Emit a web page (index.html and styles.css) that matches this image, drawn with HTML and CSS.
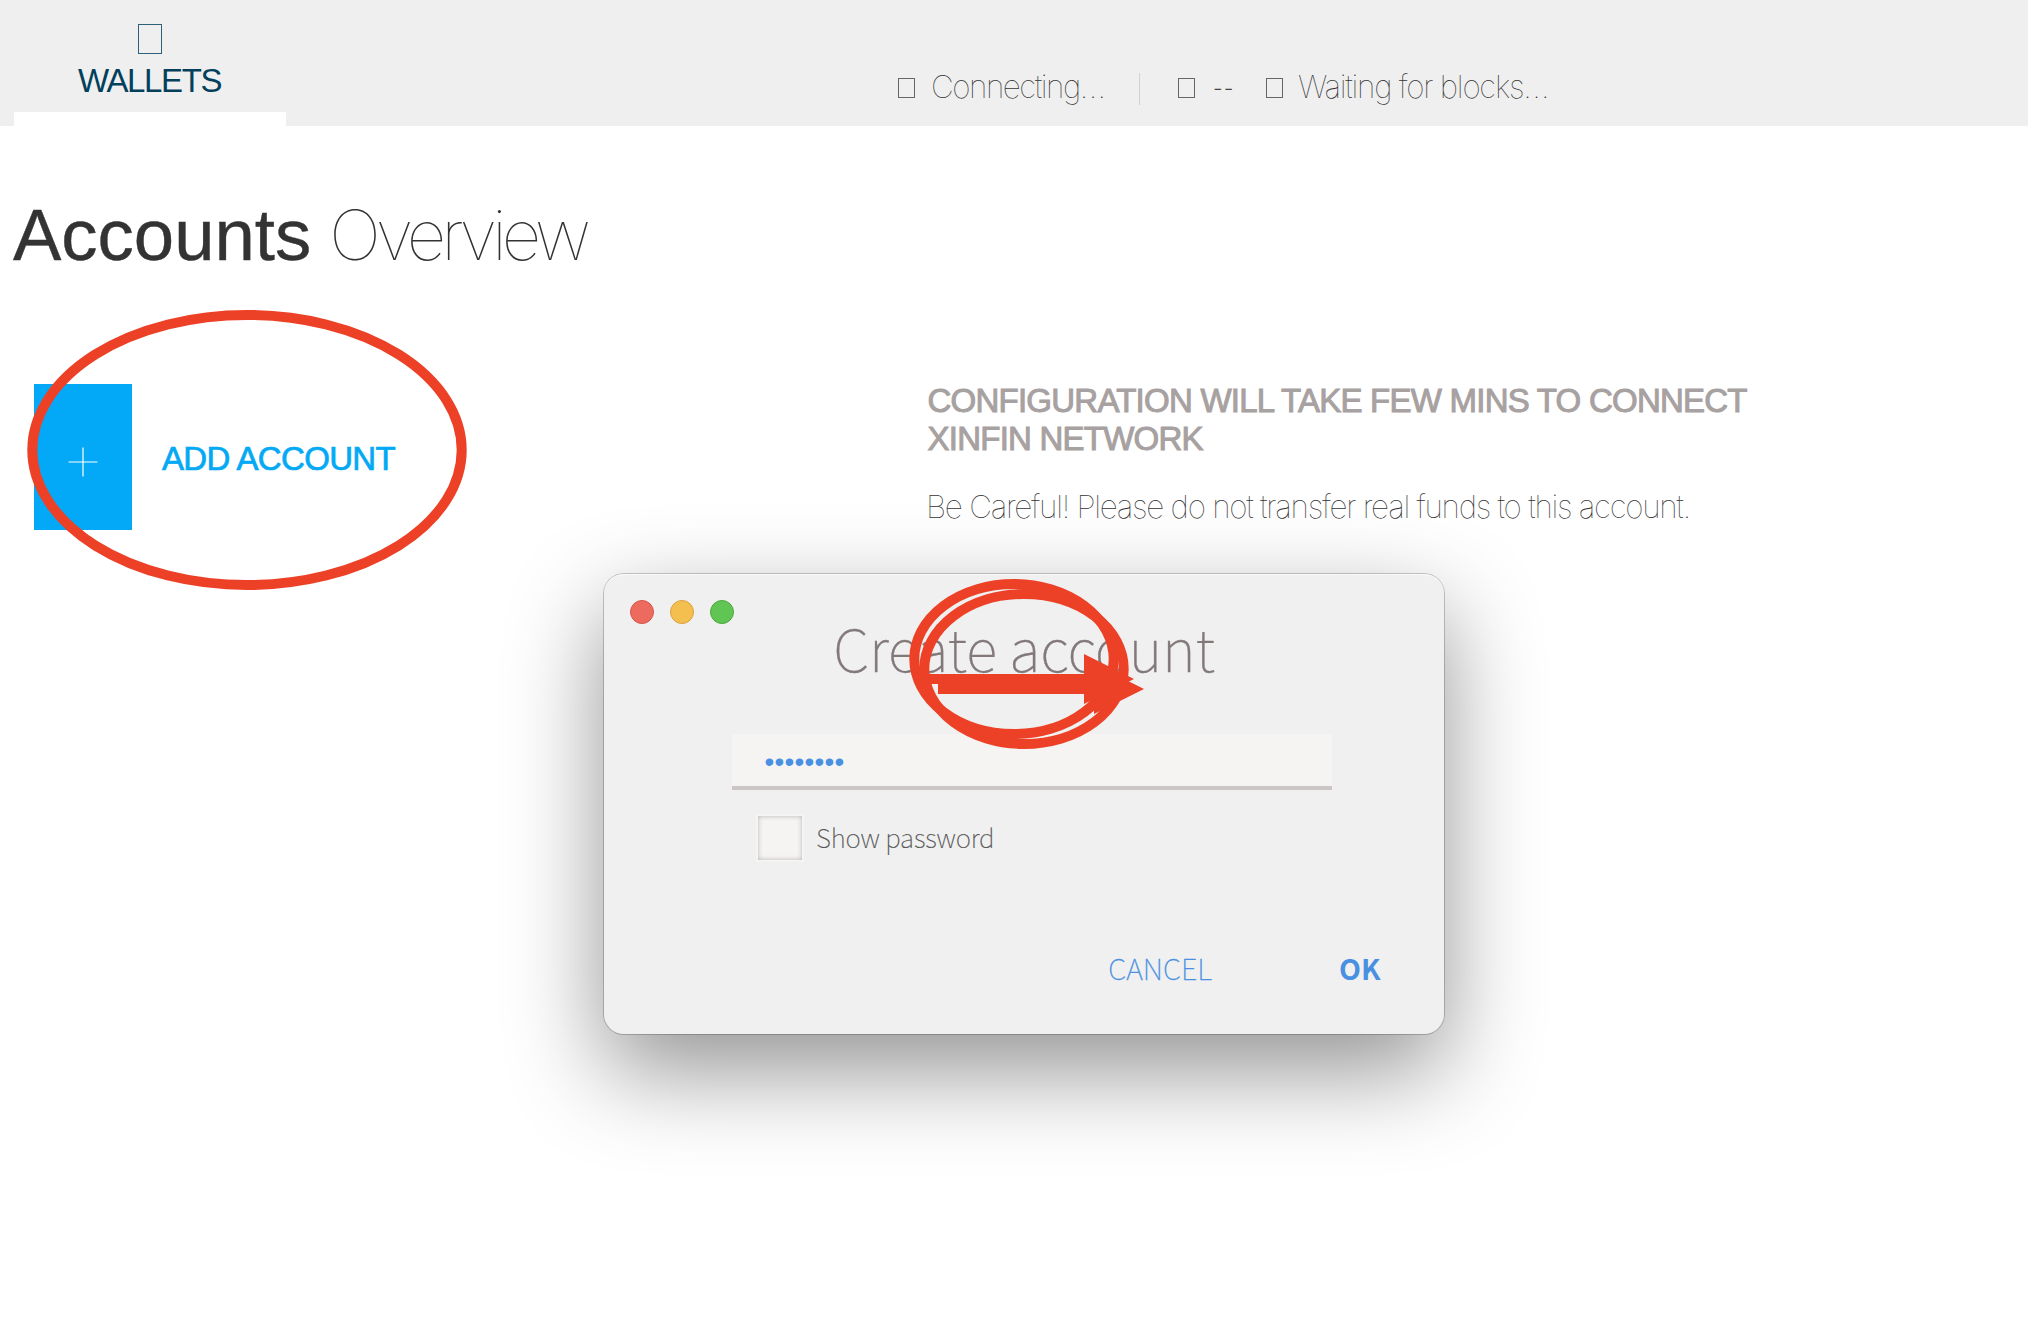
FILE: index.html
```html
<!DOCTYPE html>
<html lang="en">
<head>
<meta charset="utf-8">
<title>Wallets</title>
<link rel="stylesheet" href="styles.css">
</head>
<body>
<header class="topbar">
  <nav class="tab">
    <span class="glyph glyph-large"></span>
    <span class="tab-label">WALLETS</span>
    <span class="tab-marker"></span>
  </nav>
  <div class="status">
    <span class="glyph"></span>
    <span class="status-text">Connecting<span class="dots">...</span></span>
    <span class="divider"></span>
    <span class="glyph"></span>
    <span class="status-text peers">--</span>
    <span class="glyph"></span>
    <span class="status-text blocks">Waiting for blocks<span class="dots">...</span></span>
  </div>
</header>
<main class="main">
  <h1 class="title"><strong>Accounts</strong><em>Overview</em></h1>
  <div class="columns">
    <button class="add">
      <span class="add-icon"><svg width="30" height="30" viewBox="0 0 30 30"><path d="M15 0.500V29.500M0.500 15H29.500" stroke="#fff" stroke-width="1.200"/></svg></span>
      <span class="add-label">ADD ACCOUNT</span>
    </button>
    <section class="info">
      <h2 class="info-title">CONFIGURATION WILL TAKE FEW MINS TO CONNECT<br>XINFIN NETWORK</h2>
      <p class="info-text">Be Careful! Please do not transfer real funds to this account.</p>
    </section>
  </div>
</main>
<div class="dialog">
  <div class="lights"><i class="light red"></i><i class="light yellow"></i><i class="light green"></i></div>
  <h2 class="dialog-title">Create account</h2>
  <div class="field">••••••••</div>
  <label class="show"><span class="check"></span><span class="show-text">Show password</span></label>
  <div class="actions"><span class="cancel">CANCEL</span><span class="ok">OK</span></div>
</div>
<svg class="marks" width="2028" height="1318" viewBox="0 0 2028 1318">
  <g class="ring">
    <ellipse cx="247" cy="450" rx="214.700" ry="135"/>
    <ellipse cx="1014" cy="659" rx="99.700" ry="75"/>
    <ellipse cx="1024" cy="669" rx="99.700" ry="75"/>
  </g>
  <g class="arrow">
    <path d="M928 674H1084V654L1134 679L1084 704V684H928Z"/>
    <path d="M938 684H1094V664L1144 689L1094 714V694H938Z"/>
  </g>
</svg>
</body>
</html>
```
FILE: styles.css
```css
* { box-sizing: border-box; }
body {
  margin: 0;
  width: 2028px;
  height: 1318px;
  position: relative;
  overflow: hidden;
  background: #fff;
  color: #333;
  font-family: "Liberation Sans", Arial, sans-serif;
}
h1, h2, p { margin: 0; font-weight: 400; }

/* top bar */
.topbar {
  display: flex;
  height: 126px;
  padding-left: 14px;
  background: #efefef;
}
.tab {
  display: flex;
  flex-direction: column;
  align-items: center;
  width: 272px;
  padding-top: 24px;
  color: #02405c;
}
.glyph {
  width: 17px;
  height: 20px;
  margin-top: 7px;
  border: 1px solid #666;
}
.glyph-large {
  width: 24px;
  height: 30px;
  margin-top: 0;
  border-color: #2f6079;
}
.tab-label {
  margin-top: 9px;
  padding-right: 1px;
  font-size: 33px;
  line-height: 36px;
  letter-spacing: -1.4px;
}
.tab-marker {
  width: 272px;
  height: 14px;
  margin-top: auto;
  background: #fff;
}
.status {
  display: grid;
  grid-template-columns: 33px 208px 39px 35px 53px 32px auto;
  align-items: start;
  margin-left: 612px;
  padding-top: 71px;
}
.status-text {
  font: 100 31.5px/32px Inter, sans-serif;
  letter-spacing: -1.5px;
  white-space: nowrap;
}
.blocks { letter-spacing: -1.27px; }
.dots { letter-spacing: 0.4px; }
.peers { font-size: 22px; letter-spacing: 1px; padding-top: 1px; -webkit-text-stroke: 0.4px; }
.divider {
  width: 1px;
  height: 32px;
  margin-top: 2px;
  background: #d2d2d2;
}

/* page */
.main { padding: 69px 14px 0 13px; }
.title {
  display: flex;
  align-items: baseline;
  gap: 18px;
  font-size: 72.5px;
  line-height: 80px;
}
.title strong { font-weight: 400; letter-spacing: 0; -webkit-text-stroke: 0.4px; }
.title em {
  font: 100 69px/80px Inter, sans-serif;
  letter-spacing: -5.1px;
}
.columns {
  display: flex;
  align-items: flex-start;
  margin-top: 109px;
  padding-left: 21px;
}
.add {
  display: flex;
  align-items: center;
  gap: 30px;
  width: 892px;
  padding: 0;
  border: 0;
  background: none;
  color: #03a9f4;
}
.add-icon {
  display: flex;
  justify-content: center;
  align-items: center;
  width: 98px;
  height: 146px;
  padding-top: 9px;
  background: #03a9f7;
}
.add-label {
  padding-top: 3px;
  font: 33px/38px "Liberation Sans", Arial, sans-serif;
  letter-spacing: -0.65px;
  -webkit-text-stroke: 0.7px;
}
.info { margin-top: -2px; }
.info-title {
  padding-left: 1.5px;
  color: #a7a1a1;
  font-size: 33px;
  line-height: 38px;
  letter-spacing: -0.76px;
  white-space: nowrap;
  -webkit-text-stroke: 1px;
}
.info-text {
  margin-top: 30px;
  font: 100 31.5px/38px Inter, sans-serif;
  letter-spacing: -1.29px;
  white-space: nowrap;
}

/* floating window */
.dialog {
  position: absolute;
  left: 604px;
  top: 574px;
  width: 840px;
  height: 460px;
  padding-top: 38px;
  border-radius: 20px;
  background: #f0f0f0;
  box-shadow: 0 0 0 1px rgba(0, 0, 0, 0.2), 0 36px 96px rgba(0, 0, 0, 0.43), inset 0 1px 0 #fafafa;
  font-family: "Noto Sans CJK SC", sans-serif;
}
.lights {
  position: absolute;
  left: 26px;
  top: 26px;
  display: flex;
  gap: 16px;
}
.light { width: 24px; height: 24px; border-radius: 50%; border: 1px solid; }
.red { background: #ed6a5e; border-color: #d5554b; }
.yellow { background: #f5bf4f; border-color: #d9a23c; }
.green { background: #61c554; border-color: #4ea73c; }
.dialog-title {
  color: #827879;
  font-weight: 100;
  font-size: 58px;
  line-height: 70px;
  letter-spacing: -0.15px;
  text-align: center;
  -webkit-text-stroke: 0.4px;
}
.field {
  width: 600px;
  height: 56px;
  margin: 52px 0 0 128px;
  padding: 2px 0 0 32.5px;
  border-bottom: 4px solid #cbc5c6;
  background: #f5f4f2;
  color: #4a90e2;
  font: 28px/52px "Liberation Sans", Arial, sans-serif;
  letter-spacing: 0.2px;
}
.show {
  display: flex;
  align-items: center;
  gap: 14px;
  margin: 26px 0 0 154px;
}
.check {
  width: 44px;
  height: 44px;
  background: #f5f4f2;
  box-shadow: 0 0 0 2px #f4f4f3, inset 0 0 5px rgba(0, 0, 0, 0.26);
}
.show-text {
  padding-bottom: 2px;
  color: #555;
  font-weight: 100;
  font-size: 26px;
  line-height: 42px;
  letter-spacing: -0.15px;
  -webkit-text-stroke: 0.2px;
}
.actions {
  display: flex;
  justify-content: flex-end;
  align-items: baseline;
  gap: 127px;
  margin-top: 87px;
  padding-right: 63.5px;
  color: #4a90e2;
  font-size: 29px;
  line-height: 40px;
}
.cancel { font-weight: 100; -webkit-text-stroke: 0.3px; }
.ok { font-weight: 700; font-size: 28.5px; }

/* annotations drawn over everything */
.marks { position: absolute; left: 0; top: 0; }
.ring { fill: none; stroke: #ec4127; stroke-width: 10; }
.arrow { fill: #ec4127; }
```
